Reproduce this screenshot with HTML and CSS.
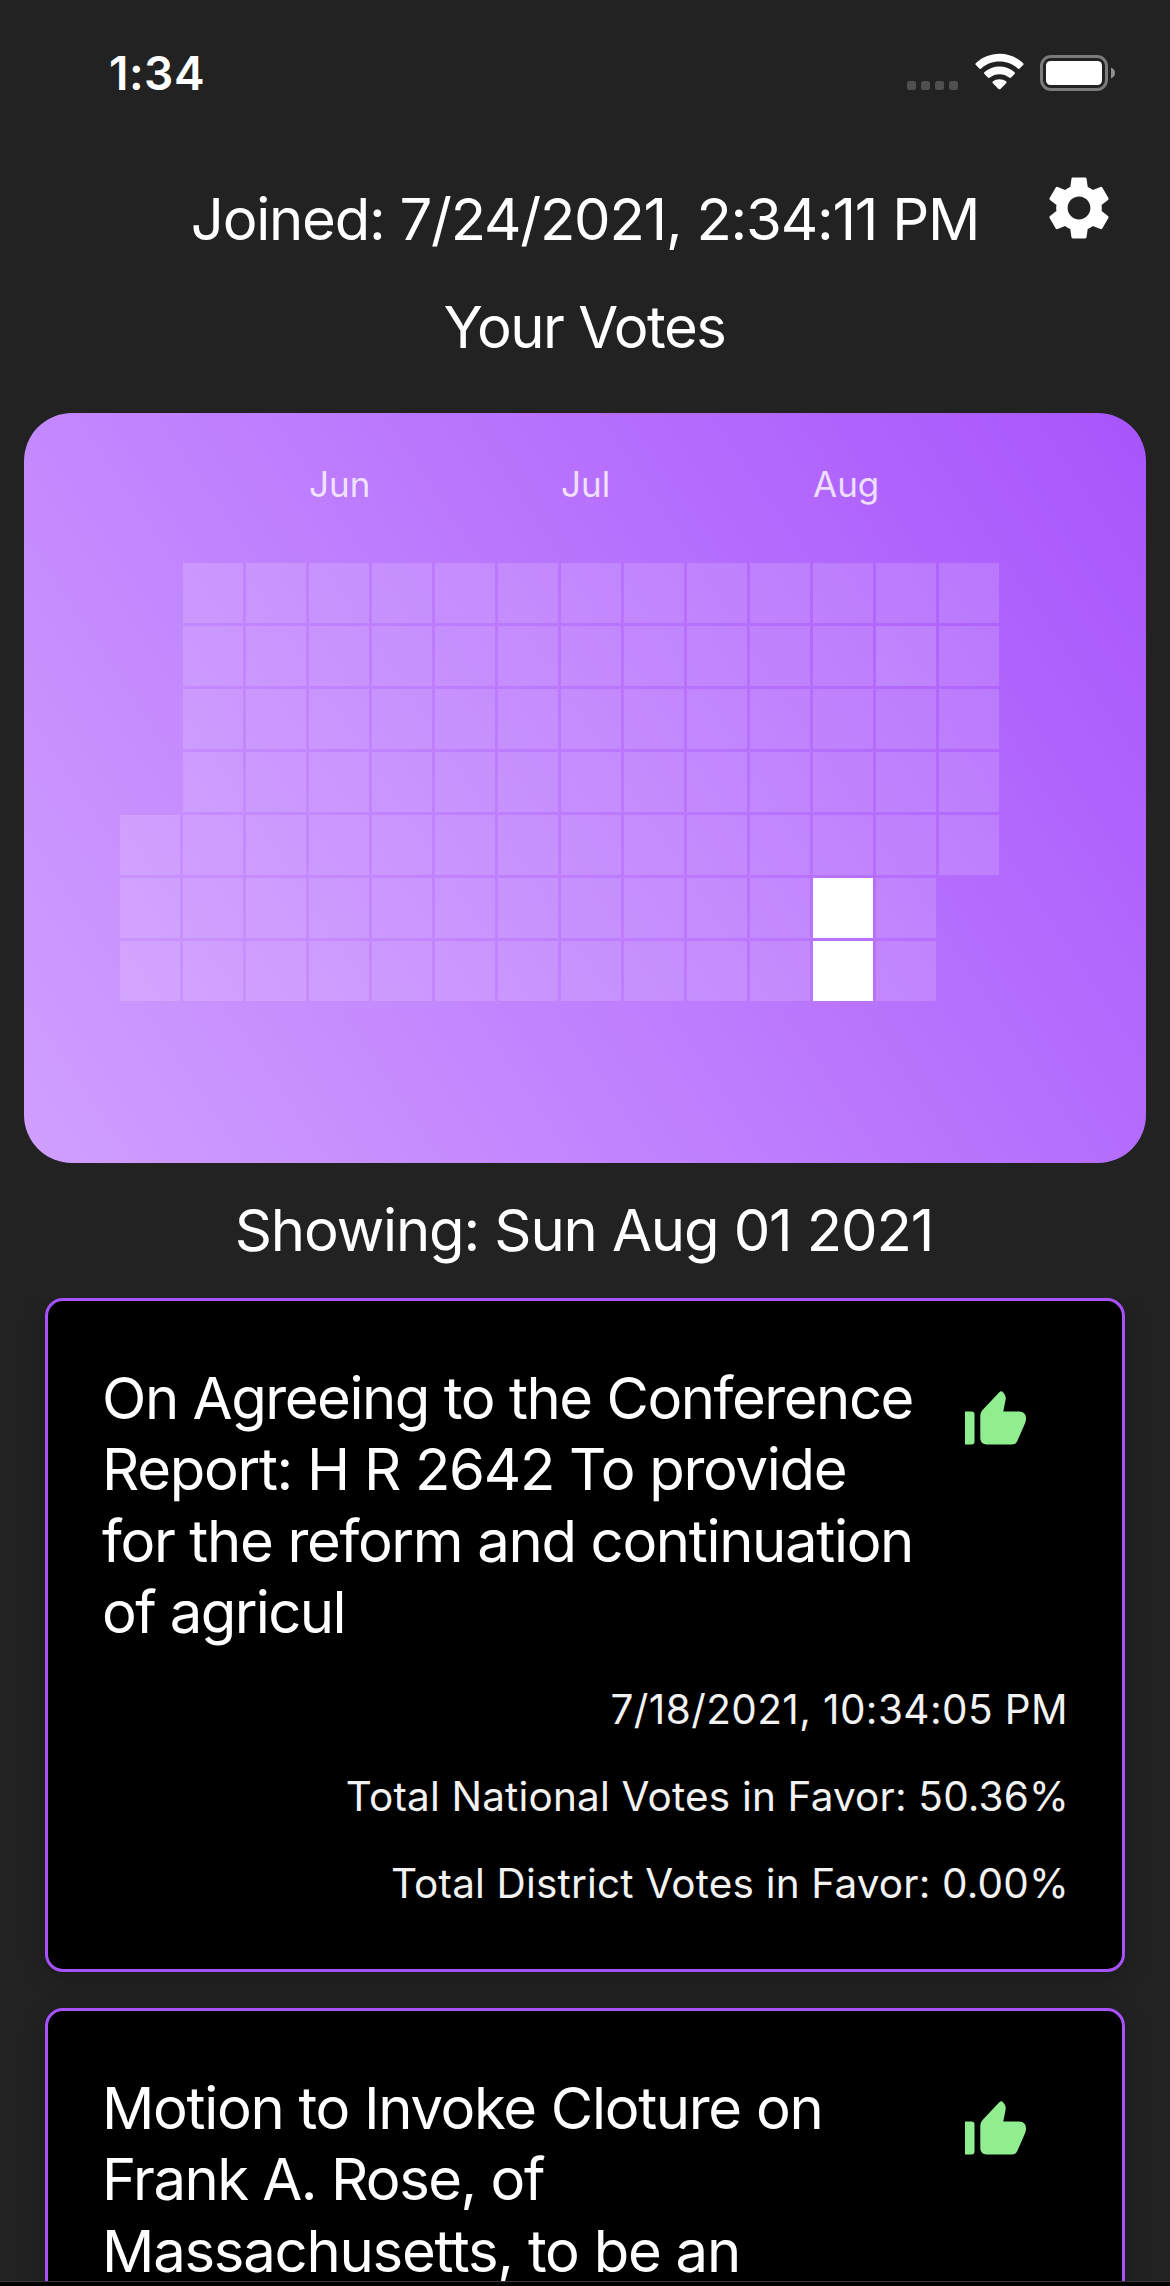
FILE: index.html
```
<!DOCTYPE html>
<html lang="en">
<head>
<meta charset="utf-8">
<title>Your Votes</title>
<link rel="stylesheet" href="styles.css">
</head>
<body>
<div class="screen">
  <header class="status">
    <span class="clock">1:34</span>
    <div class="indicators">
      <svg class="cell-dots" width="51" height="9" viewBox="0 0 51 9"><rect width="9" height="9" rx="2.5"/><rect x="14" width="9" height="9" rx="2.5"/><rect x="28" width="9" height="9" rx="2.5"/><rect x="42" width="9" height="9" rx="2.5"/></svg>
      <svg class="wifi" width="49" height="37" viewBox="0 0 49 37"><path d="M24.500 0.800C33.500 0.800 41.800 4.300 48 10C48.700 10.700 48.700 11.500 48.100 12.100L44.700 15.500C44.100 16.100 43.400 16.100 42.700 15.500C37.900 11.200 31.500 8.600 24.500 8.600C17.500 8.600 11.100 11.200 6.300 15.500C5.600 16.100 4.900 16.100 4.300 15.500L0.900 12.100C0.300 11.500 0.300 10.700 1 10C7.200 4.300 15.500 0.800 24.500 0.800Z"/><path d="M24.500 13.600C30.200 13.600 35.400 15.600 39.400 19.100C40.100 19.700 40.100 20.500 39.500 21.100L36.100 24.500C35.500 25.100 34.800 25.100 34.100 24.500C31.500 22.400 28.100 21.200 24.500 21.200C20.900 21.200 17.500 22.400 14.900 24.500C14.200 25.100 13.500 25.100 12.900 24.500L9.500 21.100C8.900 20.500 8.900 19.700 9.600 19.100C13.600 15.600 18.800 13.600 24.500 13.600Z"/><path d="M24.500 26.200C27 26.200 29.200 27 31 28.300C31.700 28.900 31.700 29.700 31.100 30.300L25.500 35.900C24.900 36.500 24.100 36.500 23.500 35.900L17.900 30.300C17.300 29.700 17.300 28.900 18 28.300C19.800 27 22 26.200 24.500 26.200Z"/></svg>
      <svg class="battery" width="75" height="36" viewBox="0 0 75 36"><rect class="shell" x="1.500" y="1.500" width="65" height="33" rx="9.500"/><rect class="charge" x="6" y="6" width="56" height="24" rx="4.500"/><path class="cap" d="M71 12.500C73.600 13.500 75 15.500 75 18S73.600 22.500 71 23.500Z"/></svg>
    </div>
  </header>
  <section class="profile">
    <h1 class="heading joined">Joined: 7/24/2021, 2:34:11 PM</h1>
    <svg class="gear" width="76" height="76" viewBox="0 0 24 24"><path d="M19.140 12.940c.04-.3.060-.61.060-.94 0-.32-.02-.64-.07-.94l2.030-1.580c.18-.14.230-.41.120-.61l-1.920-3.320c-.12-.22-.37-.29-.59-.22l-2.390.96c-.5-.38-1.030-.7-1.620-.94l-.36-2.540c-.04-.24-.24-.41-.48-.41h-3.840c-.24 0-.43.170-.47.410l-.36 2.540c-.59.240-1.130.570-1.620.940l-2.390-.96c-.22-.08-.47 0-.59.220L2.740 8.870c-.12.210-.08.470.12.610l2.030 1.580c-.05.3-.09.630-.09.940s.02.640.07.940l-2.030 1.580c-.18.140-.23.410-.12.610l1.920 3.320c.12.220.37.290.59.220l2.390-.96c.5.380 1.030.7 1.620.94l.36 2.540c.05.240.24.410.48.410h3.840c.24 0 .44-.17.47-.41l.36-2.540c.59-.24 1.130-.56 1.620-.94l2.390.96c.22.080.47 0 .59-.22l1.920-3.320c.12-.22.070-.47-.12-.61l-2.010-1.580zM12 15.600c-1.980 0-3.600-1.620-3.600-3.600s1.620-3.600 3.600-3.600 3.600 1.620 3.600 3.600-1.620 3.600-3.600 3.600z"/></svg>
    <h2 class="heading your-votes">Your Votes</h2>
  </section>
  <section class="heatmap">
    <div class="months"><span class="jun">Jun</span><span class="jul">Jul</span><span class="aug">Aug</span></div>
    <div class="days">
      <i class="off"></i><i class="off"></i><i class="off"></i><i class="off"></i><i></i><i></i><i></i>
      <i></i><i></i><i></i><i></i><i></i><i></i><i></i>
      <i></i><i></i><i></i><i></i><i></i><i></i><i></i>
      <i></i><i></i><i></i><i></i><i></i><i></i><i></i>
      <i></i><i></i><i></i><i></i><i></i><i></i><i></i>
      <i></i><i></i><i></i><i></i><i></i><i></i><i></i>
      <i></i><i></i><i></i><i></i><i></i><i></i><i></i>
      <i></i><i></i><i></i><i></i><i></i><i></i><i></i>
      <i></i><i></i><i></i><i></i><i></i><i></i><i></i>
      <i></i><i></i><i></i><i></i><i></i><i></i><i></i>
      <i></i><i></i><i></i><i></i><i></i><i></i><i></i>
      <i></i><i></i><i></i><i></i><i></i><i class="full"></i><i class="full"></i>
      <i></i><i class="low"></i><i></i><i></i><i></i><i></i><i></i>
      <i></i><i></i><i></i><i></i><i></i>
    </div>
  </section>
  <h2 class="heading showing">Showing: Sun Aug 01 2021</h2>
  <main class="votes">
    <article class="vote">
      <div class="vote-top">
        <h3 class="vote-title"><span class="l1">On Agreeing to the Conference</span><br><span class="l2">Report: H R 2642 To provide</span><br><span class="l3">for the reform and continuation</span><br><span class="l4">of agricul</span></h3>
        <svg class="thumb" width="61" height="54" viewBox="0 0 61 54"><path d="M0 20.500H6.500Q9.500 20.500 9.500 23.500V50.500Q9.500 53.500 6.500 53.500H0Z"/><path d="M15.300 26C15.300 23 15.800 20.700 18 18.500L34.300 1.200Q36.300-.7 38.200 1.400Q41.300 4.500 40.700 8L38.300 20.500H54C59 20.500 61 23.500 61 27.500C61 29.500 60.400 31.500 59.500 33.500L52.500 49.500C51.200 52.500 49.500 53.500 46.500 53.500H22C17.800 53.500 15.300 51 15.300 46.800Z"/></svg>
      </div>
      <div class="facts"><p class="f1">7/18/2021, 10:34:05 PM</p><p class="f2">Total National Votes in Favor: 50.36%</p><p class="f3">Total District Votes in Favor: 0.00%</p></div>
    </article>
    <article class="vote">
      <div class="vote-top">
        <h3 class="vote-title"><span class="l5">Motion to Invoke Cloture on</span><br><span class="l6">Frank A. Rose, of</span><br><span class="l7">Massachusetts, to be an</span></h3>
        <svg class="thumb" width="61" height="54" viewBox="0 0 61 54"><path d="M0 20.500H6.500Q9.500 20.500 9.500 23.500V50.500Q9.500 53.500 6.500 53.500H0Z"/><path d="M15.300 26C15.300 23 15.800 20.700 18 18.500L34.300 1.200Q36.300-.7 38.200 1.400Q41.300 4.500 40.700 8L38.300 20.500H54C59 20.500 61 23.500 61 27.500C61 29.500 60.400 31.500 59.500 33.500L52.500 49.500C51.200 52.500 49.500 53.500 46.500 53.500H22C17.800 53.500 15.300 51 15.300 46.800Z"/></svg>
      </div>
    </article>
  </main>
  <footer class="tabbar"></footer>
</div>
</body>
</html>
```
FILE: styles.css
```
* { box-sizing: border-box; margin: 0; padding: 0; }
body { background: #222; color: #fff; font-family: Inter, "Liberation Sans", sans-serif; }
.screen { width: 1170px; height: 2286px; overflow: hidden; display: flex; flex-direction: column; }
svg { display: block; fill: #fff; }

.status { height: 148px; flex: none; display: flex; justify-content: space-between; padding: 44px 55px 0 109px; }
.clock { font-size: 46px; line-height: 58px; font-weight: 600; letter-spacing: .5px; }
.indicators { display: flex; align-items: flex-start; }
.cell-dots { margin: 37px 17px 0 0; fill: #505050; }
.wifi { margin: 9px 16px 0 0; }
.battery { margin-top: 11px; }
.shell { fill: none; stroke: #7b7b7b; stroke-width: 3; }
.cap { fill: #8f8f8f; }

.heading { font-size: 58px; font-weight: 400; letter-spacing: -1.500px; line-height: 72px; text-align: center; white-space: nowrap; }
.profile { height: 265px; flex: none; display: grid; grid-template-columns: 1170px; grid-template-rows: 107px auto; }
.joined { grid-area: 1 / 1; padding-top: 35px; letter-spacing: -1.230px; }
.gear { grid-area: 1 / 1; justify-self: end; margin: 22px 53px 0 0; }
.your-votes { grid-area: 2 / 1; padding: 36px 1px 0 0; }

.heatmap { height: 750px; flex: none; margin: 0 24px; border-radius: 48px; background: linear-gradient(56.24deg, #d09fff, #a855fc); }
.months { height: 150px; padding: 49px 0 0 285px; display: grid; grid-template-columns: 252px 252px 252px; font-size: 35px; line-height: 44px; color: rgba(255,255,255,.8); }
.days { margin-left: 96px; display: grid; grid-auto-flow: column; grid-template-rows: repeat(7, 60px); grid-auto-columns: 60px; gap: 3px; }
.days i { background: rgba(255,255,255,.15); }
.days .off { background: none; }
.days .low { background: rgba(255,255,255,.19); }
.days .full { background: #fff; }

.showing { flex: none; height: 135px; padding: 31px 2px 0 0; letter-spacing: -1.120px; }
.votes { flex: 1; min-height: 0; overflow: hidden; padding: 0 45px; display: flex; flex-direction: column; gap: 36px; }
.vote { flex: none; height: 674px; background: #000; border: 3px solid #a652fd; border-radius: 18px; padding: 62px 54px 0; box-shadow: 0 6px 24px rgba(0,0,0,.22); }
.vote-top { display: flex; justify-content: space-between; align-items: flex-start; }
.vote-title { font-size: 58px; font-weight: 400; letter-spacing: -1.500px; line-height: 71.400px; white-space: nowrap; }
.l1 { letter-spacing: -1.450px; }
.l2 { letter-spacing: -1.280px; }
.l3 { letter-spacing: -1.330px; }
.l4 { letter-spacing: -1.600px; }
.l5 { letter-spacing: -1.300px; }
.l7 { letter-spacing: -1.240px; }
.thumb { flex: none; fill: #90ee90; margin: 28px 42px 0 0; }
.facts { padding-top: 35px; text-align: right; font-size: 40.500px; line-height: 51px; color: #f2f2f2; display: grid; gap: 36px; }
.f1 { letter-spacing: .4px; }
.f2, .f3 { letter-spacing: .17px; margin-right: -1px; }
.tabbar { flex: none; height: 5px; background: #000; border-top: 1px solid #383838; }
```
